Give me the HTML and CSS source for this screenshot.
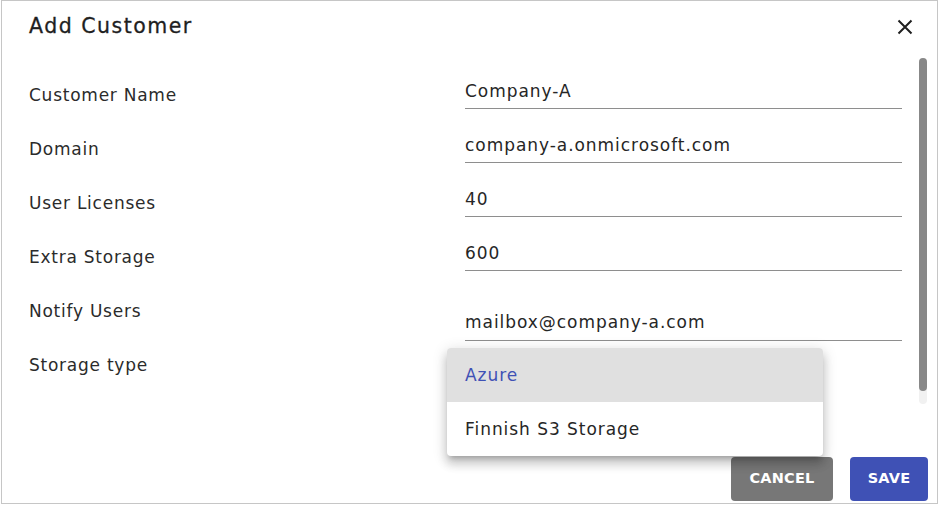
FILE: index.html
```html
<!DOCTYPE html>
<html lang="en">
<head>
<meta charset="utf-8">
<title>Add Customer</title>
<link rel="stylesheet" href="styles.css">
</head>
<body>
<div class="dialog">
  <header class="dialog-header">
    <h2 class="dialog-title">Add Customer</h2>
    <button class="close-btn" aria-label="Close">
      <svg width="16" height="16" viewBox="0 0 16 16"><path d="M1.5 1.5 L14.5 14.5 M14.5 1.5 L1.5 14.5" stroke="#1f1f1f" stroke-width="2" fill="none"/></svg>
    </button>
  </header>
  <div class="form">
    <div class="row">
      <div class="label">Customer Name</div>
      <div class="field">Company-A</div>
    </div>
    <div class="row">
      <div class="label">Domain</div>
      <div class="field">company-a.onmicrosoft.com</div>
    </div>
    <div class="row">
      <div class="label">User Licenses</div>
      <div class="field">40</div>
    </div>
    <div class="row">
      <div class="label">Extra Storage</div>
      <div class="field">600</div>
    </div>
    <div class="row">
      <div class="label">Notify Users</div>
      <div class="field field-tall">mailbox@company-a.com</div>
    </div>
    <div class="row">
      <div class="label">Storage type</div>
      <div class="field field-select"></div>
    </div>
  </div>
  <div class="actions">
    <button class="btn btn-cancel">CANCEL</button>
    <button class="btn btn-save">SAVE</button>
  </div>
  <div class="scrollbar"><div class="thumb"></div></div>
  <ul class="menu">
    <li class="menu-item selected">Azure</li>
    <li class="menu-item">Finnish S3 Storage</li>
  </ul>
</div>
</body>
</html>
```
FILE: styles.css
```css
html, body {
  margin: 0;
  padding: 0;
  background: #ffffff;
}
body {
  font-family: "DejaVu Sans", "Noto Sans", sans-serif;
  color: #262626;
}
.dialog {
  position: relative;
  box-sizing: border-box;
  margin-left: 1px;
  width: 937px;
  height: 504px;
  border: 1px solid #c6c6c6;
  background: #fff;
  overflow: hidden;
}
.dialog-header {
  display: flex;
  align-items: center;
  justify-content: space-between;
  height: 49px;
  padding: 0 24px 0 27px;
}
.dialog-title {
  margin: 0;
  font-size: 20.5px;
  font-weight: normal;
  color: #1f1f1f;
  letter-spacing: 1.5px;
  -webkit-text-stroke: 0.3px #1f1f1f;
}
.close-btn {
  border: 0;
  background: none;
  padding: 0;
  width: 16px;
  height: 16px;
  display: flex;
  margin-top: 3px;
  cursor: pointer;
}
.form {
  padding: 29px 35px 0 27px;
  display: flex;
  flex-direction: column;
}
.row {
  display: flex;
  height: 54px;
}
.label {
  width: 436px;
  margin-top: 4px;
  line-height: 24px;
  font-size: 17px;
  letter-spacing: 0.75px;
  color: #2b2b2b;
}
.field {
  box-sizing: border-box;
  flex: 1;
  height: 30px;
  line-height: 24px;
  padding-bottom: 5px;
  border-bottom: 1px solid #8e8e8e;
  font-size: 17px;
  letter-spacing: 0.95px;
  color: #262626;
}
.field-tall {
  height: 46px;
  padding-top: 15px;
  padding-bottom: 6px;
}
.field-select {
  border-bottom-color: transparent;
}
.actions {
  position: absolute;
  right: 9px;
  bottom: 2px;
  display: flex;
  gap: 17px;
}
.btn {
  height: 44px;
  padding: 0 0 2px;
  border: 0;
  border-radius: 4px;
  color: #fff;
  font-family: "DejaVu Sans", sans-serif;
  font-weight: 700;
  font-size: 14.5px;
  letter-spacing: 0.2px;
}
.btn-cancel {
  width: 102px;
  background: #777777;
}
.btn-save {
  width: 78px;
  background: #3f51b5;
}
.scrollbar {
  position: absolute;
  left: 917px;
  top: 57px;
  width: 8px;
  height: 346px;
  border-radius: 4px;
  background: #f1f1f1;
}
.thumb {
  height: 333px;
  border-radius: 4px;
  background: #888888;
}
.menu {
  position: absolute;
  left: 445px;
  top: 347px;
  width: 376px;
  margin: 0;
  padding: 0;
  list-style: none;
  background: #fff;
  border-radius: 4px;
  overflow: hidden;
  box-shadow: 0 5px 5px -3px rgba(0,0,0,0.2), 0 8px 10px 1px rgba(0,0,0,0.14), 0 3px 14px 2px rgba(0,0,0,0.12);
}
.menu-item {
  height: 54px;
  line-height: 54px;
  padding-left: 18px;
  font-size: 17px;
  letter-spacing: 0.95px;
  color: #262626;
}
.menu-item.selected {
  background: #e0e0e0;
  color: #3f51b5;
}
```
